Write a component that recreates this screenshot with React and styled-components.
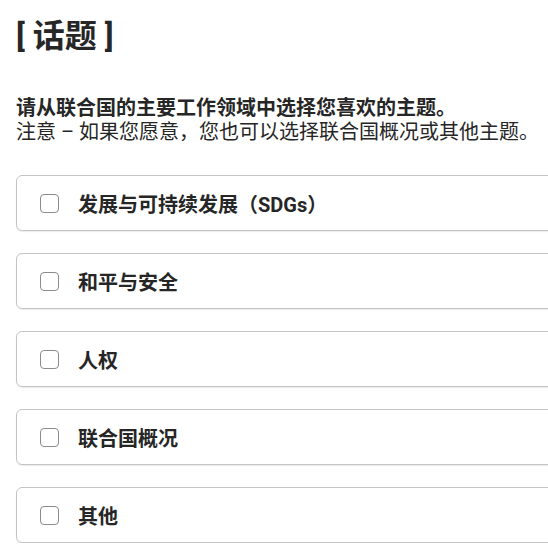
import styled, { createGlobalStyle } from "styled-components";

const topics = ["发展与可持续发展（SDGs）", "和平与安全", "人权", "联合国概况", "其他"];

function App() {
  return (
    <>
      <GlobalStyle />
      <Page>
        <Title>[ 话题 ]</Title>
        <Intro>
          <strong>请从联合国的主要工作领域中选择您喜欢的主题。</strong>
          <br />
          注意 – 如果您愿意，您也可以选择联合国概况或其他主题。
        </Intro>
        <TopicList>
          {topics.map((topic) => (
            <TopicCard key={topic}>
              <CheckBox type="checkbox" />
              <TopicLabel>{topic}</TopicLabel>
            </TopicCard>
          ))}
        </TopicList>
      </Page>
    </>
  );
}

export default App;

/////////// styled-component

const GlobalStyle = createGlobalStyle`
  body {
    margin: 0;
    background: #ffffff;
    overflow: hidden;
    font-family: Roboto, "Noto Sans CJK SC", sans-serif;
    color: #222222;
  }
`;

const Page = styled.div`
  width: 100vw;
  overflow: hidden;
  padding: 16px 0 0 16px;
  box-sizing: border-box;
`;

const Title = styled.h1`
  margin: 0;
  font-size: 32px;
  line-height: 40px;
  font-weight: 700;
  color: #262626;
`;

const Intro = styled.p`
  margin: 40px 0 0;
  font-size: 20px;
  line-height: 24px;
  color: #262626;

  strong {
    font-weight: 700;
  }
`;

const TopicList = styled.div`
  display: flex;
  flex-direction: column;
  gap: 22px;
  margin-top: 31px;
`;

const TopicCard = styled.label`
  display: flex;
  align-items: center;
  width: 620px;
  height: 56px;
  box-sizing: border-box;
  padding-left: 23px;
  border: 1px solid #c4c4c4;
  border-radius: 6px;
  box-shadow: 0 1px 1px rgba(0, 0, 0, 0.08);
  flex-shrink: 0;
`;

const CheckBox = styled.input`
  appearance: none;
  margin: 0;
  width: 19px;
  height: 19px;
  border: 1px solid #8c8c8c;
  border-radius: 4px;
  background: #ffffff;
  flex-shrink: 0;
`;

const TopicLabel = styled.span`
  margin-left: 19px;
  font-size: 20px;
  font-weight: 700;
  color: #262626;
`;
